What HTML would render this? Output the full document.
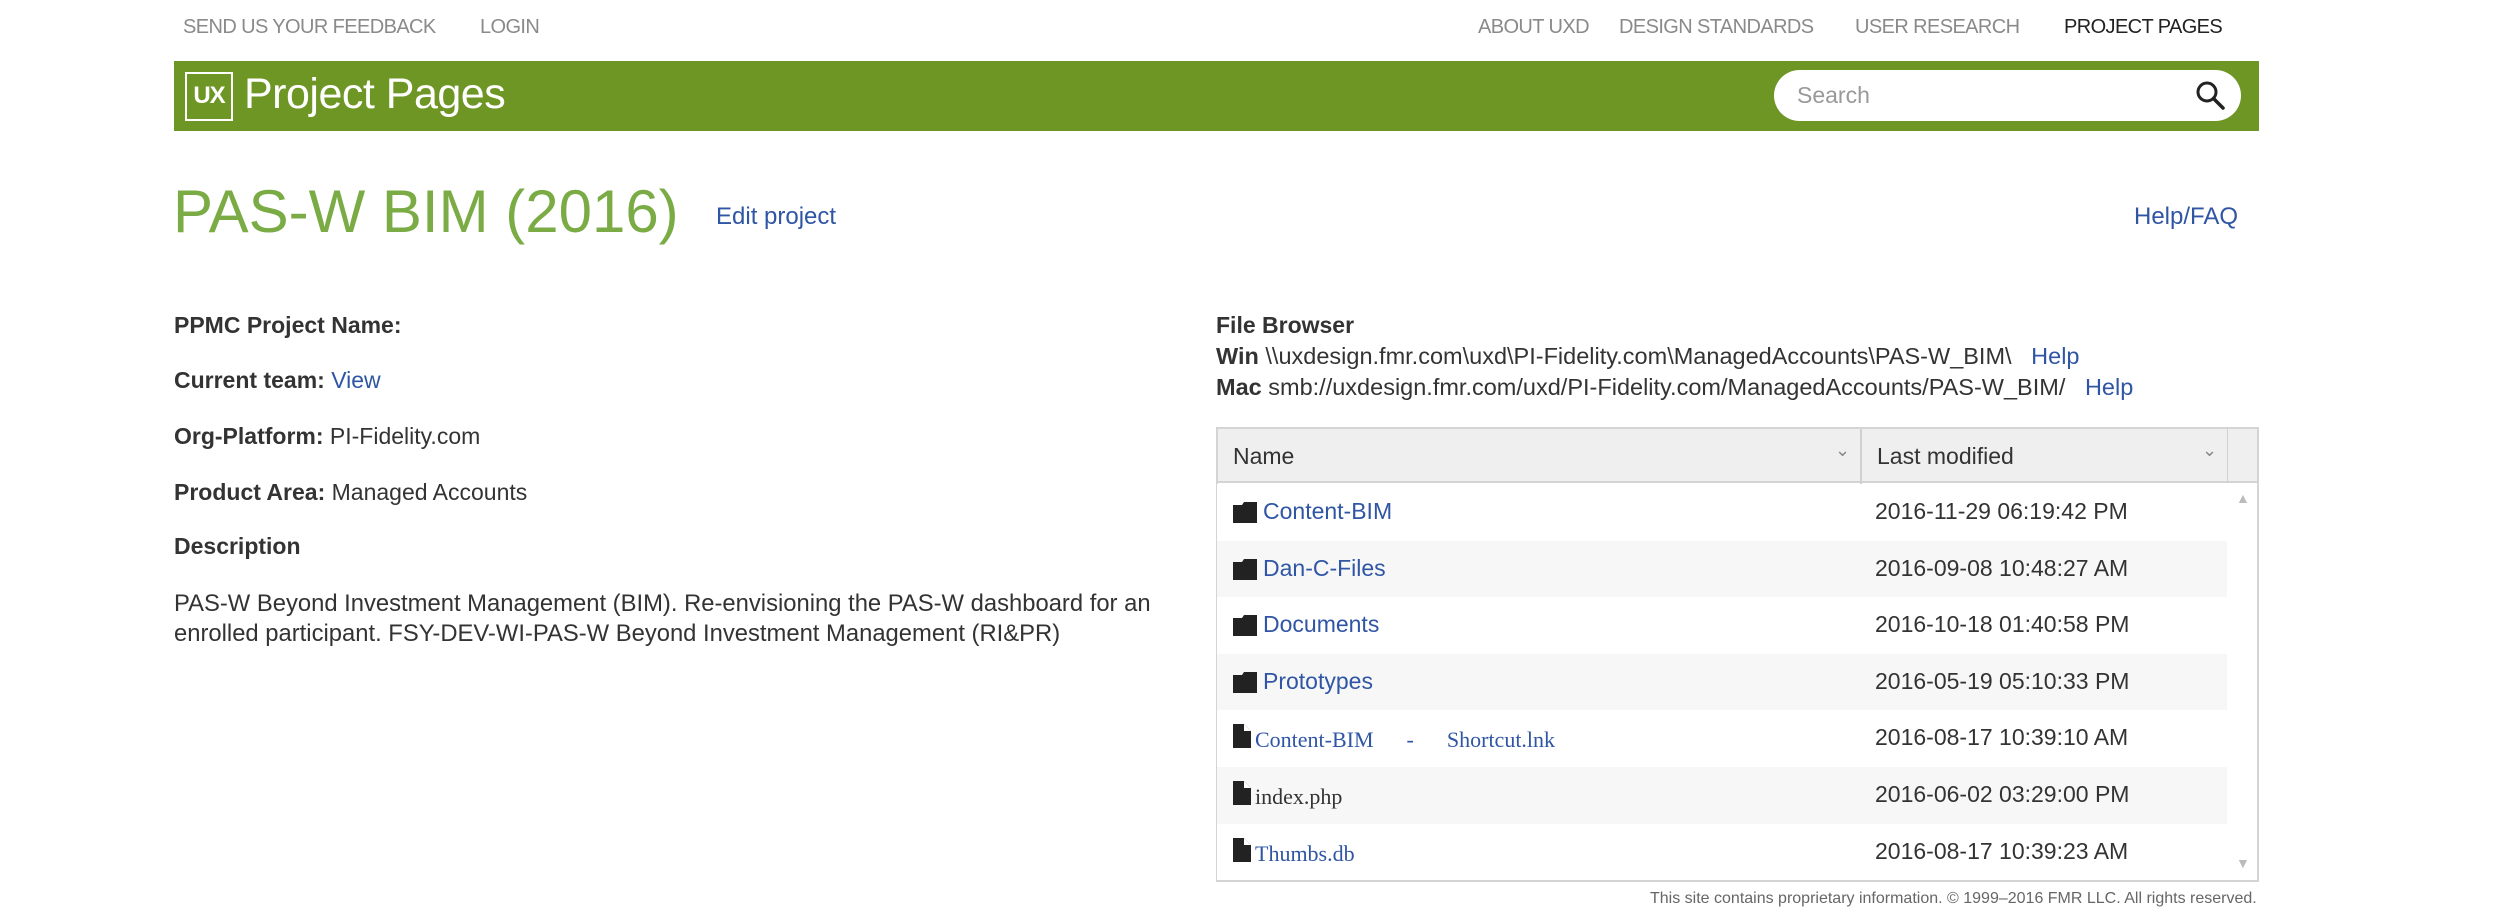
<!DOCTYPE html>
<html><head><meta charset="utf-8"><style>
*{margin:0;padding:0;box-sizing:border-box}
body{width:2500px;height:896px;overflow:hidden;background:#fff;font-family:"Liberation Sans",Arial,sans-serif;position:relative;color:#333}
.a{position:absolute;white-space:nowrap}
.nav{font-size:20px;color:#8a8a8a;top:16px;letter-spacing:-0.6px}
a,.lnk{color:#2f55a4;text-decoration:none}
.lbl{font-size:23px;color:#333}
.lbl b{color:#333}
.row{position:absolute;left:1217px;width:1010px;height:56.6px;font-size:23px}
.row .n{position:absolute;left:46px;top:14px;color:#2f55a4}
.row .d{position:absolute;left:658px;top:14px;color:#333}
.row .ic{position:absolute;left:16px;top:17px}
.ser{font-family:"Liberation Serif",serif;font-size:22px}
</style></head><body>
<div class="a nav" style="left:183px">SEND US YOUR FEEDBACK</div>
<div class="a nav" style="left:480px">LOGIN</div>
<div class="a nav" style="left:1478px">ABOUT UXD</div>
<div class="a nav" style="left:1619px">DESIGN STANDARDS</div>
<div class="a nav" style="left:1855px">USER RESEARCH</div>
<div class="a nav" style="left:2064px;color:#222">PROJECT PAGES</div>

<div class="a" style="left:174px;top:61px;width:2085px;height:70px;background:#6e9625"></div>
<div class="a" style="left:185px;top:72px;width:48px;height:49px;border:2px solid #fff;color:#fff;font-size:24px;font-weight:bold;text-align:center;line-height:44px;letter-spacing:-1px">UX</div>
<div class="a" style="left:244px;top:70px;color:#fff;font-size:43px;letter-spacing:-0.5px">Project Pages</div>
<div class="a" style="left:1774px;top:70px;width:467px;height:51px;background:#fff;border-radius:26px"></div>
<div class="a" style="left:1797px;top:82px;font-size:23px;color:#999">Search</div>
<svg class="a" style="left:2195px;top:80px" width="32" height="32" viewBox="0 0 32 32"><circle cx="12" cy="12" r="9" fill="none" stroke="#222" stroke-width="3"/><line x1="18.5" y1="18.5" x2="28" y2="28" stroke="#222" stroke-width="3.5" stroke-linecap="round"/></svg>

<div class="a" style="left:173px;top:177px;font-size:60px;color:#7aab45">PAS-W BIM (2016)</div>
<div class="a lnk" style="left:716px;top:203px;font-size:24px">Edit project</div>
<div class="a lnk" style="left:2134px;top:203px;font-size:24px">Help/FAQ</div>

<div class="a lbl" style="left:174px;top:312px"><b>PPMC Project Name:</b></div>
<div class="a lbl" style="left:174px;top:367px"><b>Current team:</b> <span class="lnk">View</span></div>
<div class="a lbl" style="left:174px;top:423px"><b>Org-Platform:</b> PI-Fidelity.com</div>
<div class="a lbl" style="left:174px;top:479px"><b>Product Area:</b> Managed Accounts</div>
<div class="a lbl" style="left:174px;top:533px"><b>Description</b></div>
<div class="a lbl" style="left:174px;top:589px;line-height:30px;font-size:23.8px">PAS-W Beyond Investment Management (BIM). Re-envisioning the PAS-W dashboard for an<br>enrolled participant. FSY-DEV-WI-PAS-W Beyond Investment Management (RI&amp;PR)</div>

<div class="a lbl" style="left:1216px;top:312px"><b>File Browser</b></div>
<div class="a lbl" style="left:1216px;top:343px;font-size:23.5px"><b>Win</b> \\uxdesign.fmr.com\uxd\PI-Fidelity.com\ManagedAccounts\PAS-W_BIM\ &nbsp;&nbsp;<span class="lnk">Help</span></div>
<div class="a lbl" style="left:1216px;top:374px;font-size:23.5px"><b>Mac</b> smb://uxdesign.fmr.com/uxd/PI-Fidelity.com/ManagedAccounts/PAS-W_BIM/ &nbsp;&nbsp;<span class="lnk">Help</span></div>

<div class="a" style="left:1216px;top:427px;width:1043px;height:455px;border:2px solid #d4d4d4"></div>
<div class="a" style="left:1218px;top:429px;width:1039px;height:54px;background:#efefef;border-bottom:2px solid #d4d4d4"></div>
<div class="a" style="left:1860px;top:429px;width:2px;height:451px;background:#d0d0d0"></div>
<div class="a" style="left:2227px;top:429px;width:1px;height:54px;background:#d0d0d0"></div>
<div class="a lbl" style="left:1233px;top:443px;color:#333">Name</div>
<div class="a lbl" style="left:1877px;top:443px;color:#333">Last modified</div>
<div class="a" style="left:1835px;top:440px;color:#888;font-size:18px">&#8964;</div>
<div class="a" style="left:2202px;top:440px;color:#888;font-size:18px">&#8964;</div>
<div class="a" style="left:2236px;top:490px;color:#bbb;font-size:14px">&#9650;</div>
<div class="a" style="left:2236px;top:855px;color:#bbb;font-size:14px">&#9660;</div>

<div class="row" style="top:484px;background:#fff"><svg class="ic" width="24" height="22"><path d="M0 4h9l2-3h13v21H0z" fill="#222"/></svg><span class="n">Content-BIM</span><span class="d">2016-11-29 06:19:42 PM</span></div>
<div class="row" style="top:540.6px;background:#f7f7f7"><svg class="ic" width="24" height="22"><path d="M0 4h9l2-3h13v21H0z" fill="#222"/></svg><span class="n">Dan-C-Files</span><span class="d">2016-09-08 10:48:27 AM</span></div>
<div class="row" style="top:597.2px;background:#fff"><svg class="ic" width="24" height="22"><path d="M0 4h9l2-3h13v21H0z" fill="#222"/></svg><span class="n">Documents</span><span class="d">2016-10-18 01:40:58 PM</span></div>
<div class="row" style="top:653.8px;background:#f7f7f7"><svg class="ic" width="24" height="22"><path d="M0 4h9l2-3h13v21H0z" fill="#222"/></svg><span class="n">Prototypes</span><span class="d">2016-05-19 05:10:33 PM</span></div>
<div class="row" style="top:710.4px;background:#fff"><svg class="ic" style="top:14px" width="18" height="24"><path d="M0 0h11l7 7v17H0z" fill="#222"/><path d="M11 0v7h7" fill="#fff"/></svg><span class="n ser" style="left:38px;top:17px">Content-BIM &nbsp;&nbsp;&nbsp;&nbsp; - &nbsp;&nbsp;&nbsp;&nbsp; Shortcut.lnk</span><span class="d">2016-08-17 10:39:10 AM</span></div>
<div class="row" style="top:767px;background:#f7f7f7"><svg class="ic" style="top:14px" width="18" height="24"><path d="M0 0h11l7 7v17H0z" fill="#222"/><path d="M11 0v7h7" fill="#fff"/></svg><span class="n ser" style="left:38px;top:17px;color:#333">index.php</span><span class="d">2016-06-02 03:29:00 PM</span></div>
<div class="row" style="top:823.6px;background:#fff;height:56px"><svg class="ic" style="top:14px" width="18" height="24"><path d="M0 0h11l7 7v17H0z" fill="#222"/><path d="M11 0v7h7" fill="#fff"/></svg><span class="n ser" style="left:38px;top:17px">Thumbs.db</span><span class="d">2016-08-17 10:39:23 AM</span></div>

<div class="a" style="left:1650px;top:890px;font-size:16px;color:#666">This site contains proprietary information. © 1999–2016 FMR LLC. All rights reserved.</div>
</body></html>
